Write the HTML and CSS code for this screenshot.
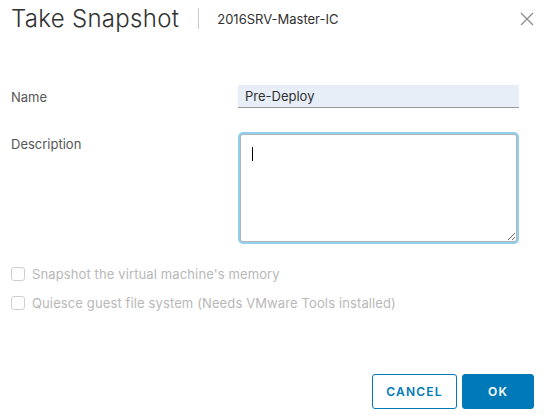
FILE: index.html
```html
<!DOCTYPE html>
<html lang="en">
<head>
  <meta charset="UTF-8">
  <title>Take Snapshot</title>
  <link rel="stylesheet" href="styles.css">
</head>
<body>
  <div class="dialog">
    <div class="dialog-header">
      <h1 class="dialog-title">Take Snapshot</h1>
      <span class="divider"></span>
      <span class="dialog-subtitle">2016SRV-Master-IC</span>
      <button class="close-btn" aria-label="Close">
        <svg width="14" height="14" viewBox="0 0 14 14">
          <path d="M1 1 L13 13 M13 1 L1 13" stroke="#8a8a8a" stroke-width="1.2" fill="none"/>
        </svg>
      </button>
    </div>

    <form class="snapshot-form">
      <div class="form-row">
        <label class="form-label" for="snapName">Name</label>
        <input class="text-input" id="snapName" type="text" value="Pre-Deploy">
      </div>
      <div class="form-row form-row-top">
        <label class="form-label label-desc" for="snapDesc">Description</label>
        <div class="textarea-wrap">
          <textarea class="text-area" id="snapDesc"></textarea>
          <span class="caret"></span>
        </div>
      </div>

      <div class="checks">
        <label class="check-row">
          <span class="check-box"></span>
          <span class="check-label">Snapshot the virtual machine's memory</span>
        </label>
        <label class="check-row">
          <span class="check-box"></span>
          <span class="check-label">Quiesce guest file system (Needs VMware Tools installed)</span>
        </label>
      </div>
    </form>

    <div class="dialog-footer">
      <button class="btn btn-outline">CANCEL</button>
      <button class="btn btn-primary">OK</button>
    </div>
  </div>
</body>
</html>
```

FILE: styles.css
```css
body {
  margin: 0;
  background: #fff;
  font-family: Inter, "Noto Sans", sans-serif;
  color: #565656;
}
.dialog {
  width: 544px;
  height: 419px;
  box-sizing: border-box;
  padding: 0 10px 0 11px;
}
.dialog-header {
  display: flex;
  align-items: center;
  height: 37px;
}
.dialog-title {
  margin: 0;
  font-size: 24px;
  font-weight: 300;
  color: #313131;
  letter-spacing: 0.3px;
}
.divider {
  width: 1px;
  height: 21px;
  background: #cccccc;
  margin: 0 18px 0 19px;
}
.dialog-subtitle {
  font-size: 13px;
  color: #313131;
}
.close-btn {
  margin-left: auto;
  border: none;
  background: none;
  padding: 0;
  width: 14px;
  height: 14px;
  display: flex;
}
.snapshot-form {
  margin-top: 48px;
  padding-right: 15px;
}
.form-row {
  display: grid;
  grid-template-columns: 227px 1fr;
  align-items: center;
}
.form-row-top {
  align-items: start;
  margin-top: 24px;
}
.form-label {
  font-size: 13px;
  color: #565656;
}
.label-desc {
  padding-top: 4px;
}
.text-input {
  height: 23px;
  box-sizing: border-box;
  border: none;
  border-bottom: 1px solid #9a9a9a;
  background: #e8eef8;
  padding: 0 7px;
  font-family: inherit;
  font-size: 13px;
  color: #313131;
  outline: none;
}
.textarea-wrap {
  position: relative;
  padding: 2px;
}
.text-area {
  display: block;
  width: 100%;
  height: 108px;
  box-sizing: border-box;
  border: 1px solid #b5b5b5;
  border-radius: 3px;
  box-shadow: 0 0 0 2px #8fd0f0;
  resize: both;
  outline: none;
  font-family: inherit;
}
.caret {
  position: absolute;
  left: 14px;
  top: 15px;
  width: 1px;
  height: 14px;
  background: #000;
}
.checks {
  margin-top: 23px;
  display: flex;
  flex-direction: column;
  gap: 15px;
}
.check-row {
  display: flex;
  align-items: center;
  height: 14px;
}
.check-box {
  width: 14px;
  height: 14px;
  box-sizing: border-box;
  border: 1px solid #cfcfcf;
  border-radius: 3px;
  margin-right: 7px;
}
.check-label {
  font-size: 13px;
  color: #b8b8b8;
  letter-spacing: 0.12px;
}
.dialog-footer {
  display: flex;
  justify-content: flex-end;
  gap: 5px;
  margin-top: 64px;
}
.btn {
  height: 35px;
  border-radius: 3px;
  font-family: inherit;
  font-size: 12px;
  font-weight: 600;
  letter-spacing: 1.2px;
  padding: 0;
}
.btn-outline {
  width: 85px;
  border: 1px solid #0079b8;
  background: #fff;
  color: #0079b8;
}
.btn-primary {
  width: 72px;
  border: 1px solid #0079b8;
  background: #0079b8;
  color: #fff;
}
```
